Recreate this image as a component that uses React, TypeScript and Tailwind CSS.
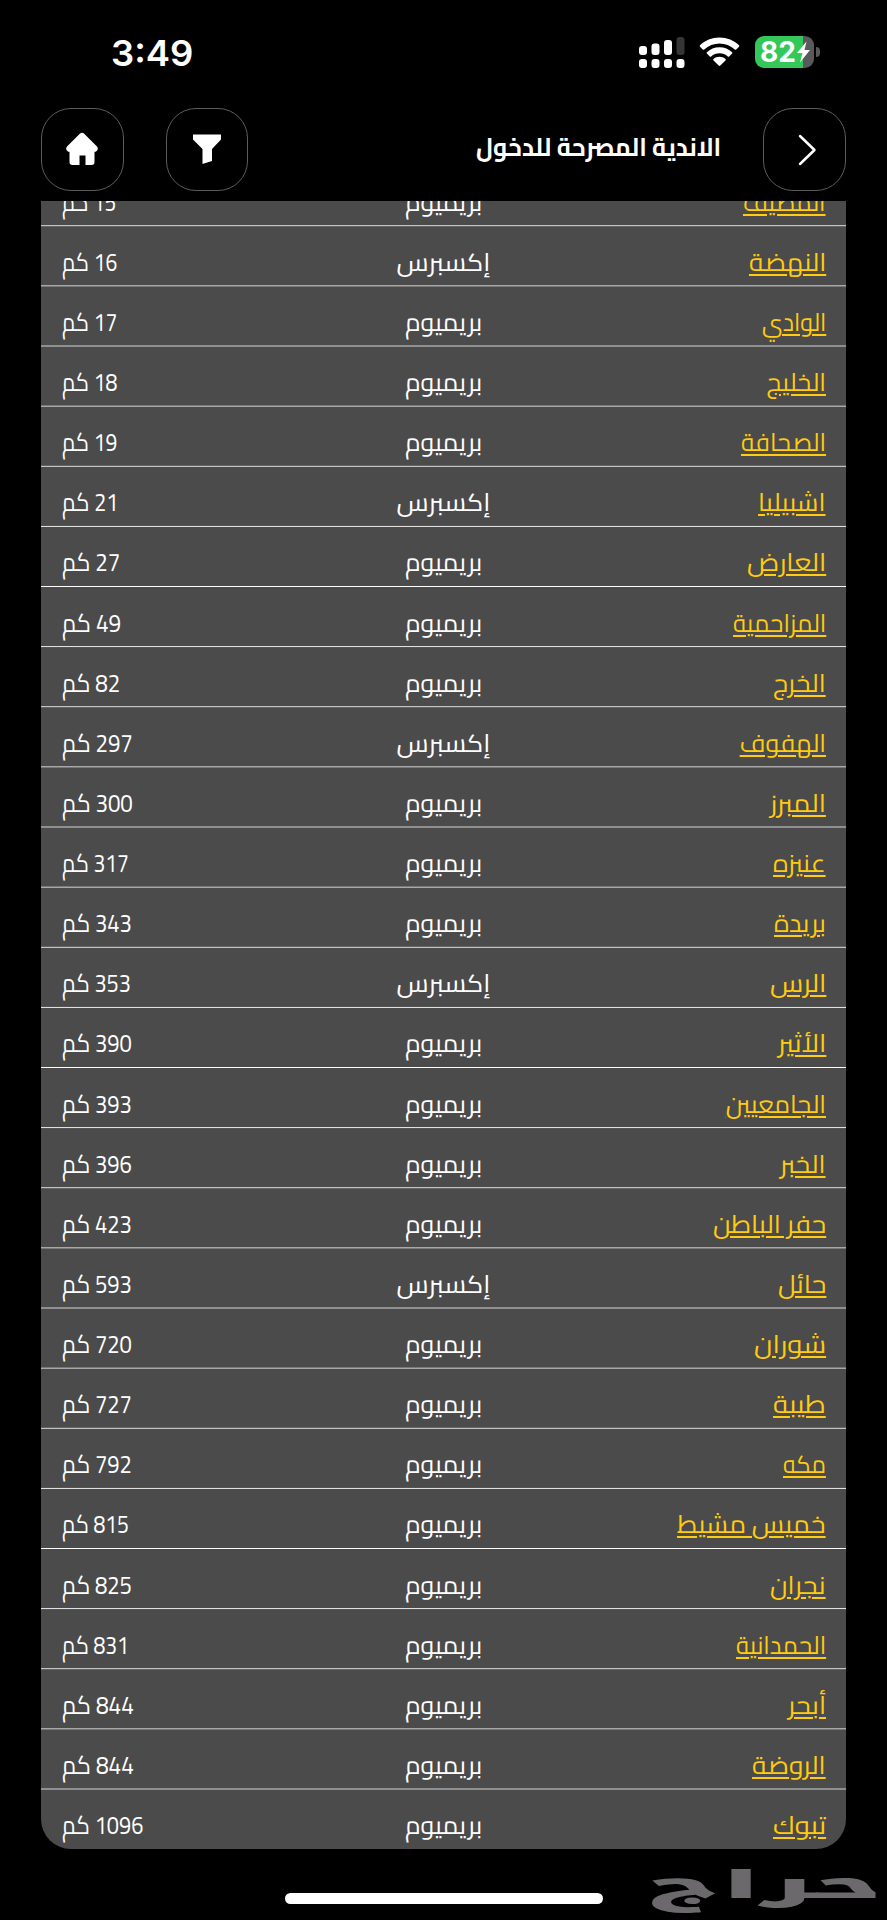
import { useLayoutEffect, useRef, useState } from "react";

type FitProps = { width: number; origin?: "left" | "right" | "center"; className?: string; children: string };

/* Scales a single line of text horizontally so it fills the given width. */
function FitText({ width, origin = "right", className = "", children }: FitProps) {
  const ref = useRef<HTMLSpanElement>(null);
  const [scale, setScale] = useState(1);
  useLayoutEffect(() => {
    if (ref.current) setScale(width / ref.current.offsetWidth);
  }, [width]);
  return (
    <span
      ref={ref}
      className={`inline-block whitespace-nowrap ${className}`}
      style={{ transform: `scaleX(${scale})`, transformOrigin: `${origin} center` }}
    >
      {children}
    </span>
  );
}

type Club = { name: string; nameWidth: number; express?: boolean; km: number; kmWidth: number };

const clubs: Club[] = [
  { name: "المصيف", nameWidth: 83, km: 15, kmWidth: 54 },
  { name: "النهضة", nameWidth: 77, express: true, km: 16, kmWidth: 55 },
  { name: "الوادي", nameWidth: 64, km: 17, kmWidth: 55 },
  { name: "الخليج", nameWidth: 59, km: 18, kmWidth: 55 },
  { name: "الصحافة", nameWidth: 85, km: 19, kmWidth: 55 },
  { name: "اشبيليا", nameWidth: 68, express: true, km: 21, kmWidth: 56 },
  { name: "العارض", nameWidth: 79, km: 27, kmWidth: 58 },
  { name: "المزاحمية", nameWidth: 93, km: 49, kmWidth: 59 },
  { name: "الخرج", nameWidth: 53, km: 82, kmWidth: 58 },
  { name: "الهفوف", nameWidth: 86, express: true, km: 297, kmWidth: 71 },
  { name: "المبرز", nameWidth: 56, km: 300, kmWidth: 71 },
  { name: "عنيزه", nameWidth: 53, km: 317, kmWidth: 67 },
  { name: "بريدة", nameWidth: 52, km: 343, kmWidth: 70 },
  { name: "الرس", nameWidth: 56, express: true, km: 353, kmWidth: 69 },
  { name: "الأثير", nameWidth: 48, km: 390, kmWidth: 70 },
  { name: "الجامعيين", nameWidth: 100, km: 393, kmWidth: 70 },
  { name: "الخبر", nameWidth: 46, km: 396, kmWidth: 70 },
  { name: "حفر الباطن", nameWidth: 113, km: 423, kmWidth: 70 },
  { name: "حائل", nameWidth: 48, express: true, km: 593, kmWidth: 70 },
  { name: "شوران", nameWidth: 72, km: 720, kmWidth: 70 },
  { name: "طيبة", nameWidth: 53, km: 727, kmWidth: 70 },
  { name: "مكه", nameWidth: 43, km: 792, kmWidth: 70 },
  { name: "خميس مشيط", nameWidth: 149, km: 815, kmWidth: 67 },
  { name: "نجران", nameWidth: 56, km: 825, kmWidth: 70 },
  { name: "الحمدانية", nameWidth: 90, km: 831, kmWidth: 67 },
  { name: "أبحر", nameWidth: 38, km: 844, kmWidth: 72 },
  { name: "الروضة", nameWidth: 74, km: 844, kmWidth: 72 },
  { name: "تبوك", nameWidth: 53, km: 1096, kmWidth: 81 },
];

const ROW_PITCH = 60.125;
const FIRST_LINE = 24.25;
/* Bottom edge of row i, measured from the top of the visible list. */
const edge = (i: number) => FIRST_LINE + ROW_PITCH * i;

function Row({ club, index }: { club: Club; index: number }) {
  const top = index === 0 ? -36 : Math.floor(edge(index - 1));
  const bottom = index === clubs.length - 1 ? 1648 : Math.floor(edge(index));
  const fraction = edge(index - 1) - Math.floor(edge(index - 1));
  return (
    <div style={{ height: bottom - top }}>
      <div className="h-px bg-white" style={{ opacity: Math.pow(1 - fraction, 1.4) }} />
      <div className="h-px bg-white" style={{ opacity: Math.pow(fraction, 1.4) }} />
      <div className="grid h-[58px] grid-cols-3 pt-[13px] pr-5 pl-[21px] text-[25px] leading-[44px] text-white">
        <div className="text-right text-[#ffcc10]">
          <FitText width={club.nameWidth} className="underline decoration-2 underline-offset-[3px]">{club.name}</FitText>
        </div>
        <div className="pr-px text-center">
          <FitText width={club.express ? 94 : 77} origin="center">{club.express ? "إكسبرس" : "بريميوم"}</FitText>
        </div>
        <div className="text-left text-[26px]">
          <FitText width={club.kmWidth} origin="left">{`${club.km} كم`}</FitText>
        </div>
      </div>
    </div>
  );
}

const button = "flex h-[83px] items-center justify-center rounded-[30px] border border-[#5c5c5c]";

function StatusBar() {
  return (
    <div dir="ltr" className="flex h-[108px] items-start justify-between pr-[67px] pl-[111px]">
      <div className="mt-[30px] flex h-[46px] items-center font-['Inter'] text-[36px] leading-[46px] font-semibold text-white">
        <FitText width={82} origin="left">3:49</FitText>
      </div>
      <div className="mt-[36px] flex h-8 items-start">
        <svg className="mr-[14px]" width="46" height="32" viewBox="0 0 46 32" fill="#fff">
          <rect x="0" y="10" width="8" height="9" rx="3" />
          <rect x="12.5" y="7.5" width="8" height="11.5" rx="3" />
          <rect x="25" y="4" width="8" height="15" rx="3" />
          <rect x="37.5" y="1" width="8" height="18" rx="3" fill="#353535" />
          <rect x="0" y="23" width="8" height="9" rx="3" />
          <rect x="12.5" y="23" width="8" height="9" rx="3" />
          <rect x="25" y="23" width="8" height="9" rx="3" />
          <rect x="37.5" y="23" width="8" height="9" rx="3" />
        </svg>
        <svg className="mr-[15px]" width="41" height="32" viewBox="0 0 41 32" fill="#fff">
          <path d="M20.500 1.500C28 1.500 35 4.500 40 9.300q.7.700 0 1.400l-2.800 2.800q-.7.600-1.400 0C31.500 9.600 26.200 7.400 20.500 7.400S9.500 9.600 5.200 13.500q-.7.600-1.400 0L1 10.700q-.7-.7 0-1.400C6 4.500 13 1.500 20.500 1.500z" />
          <path d="M20.500 11.200c5 0 9.300 1.900 12.600 5q.7.700 0 1.400l-2.900 2.800q-.7.600-1.400 0c-2.200-2-5.100-3.200-8.300-3.200s-6.100 1.200-8.300 3.200q-.7.600-1.400 0l-2.900-2.800q-.7-.7 0-1.400c3.300-3.100 7.600-5 12.600-5z" />
          <path d="M20.500 20.800c2.300 0 4.400.8 6 2.100q.8.700 0 1.500l-5.200 5.200q-.8.800-1.600 0l-5.200-5.200q-.8-.8 0-1.500c1.600-1.300 3.700-2.100 6-2.100z" />
        </svg>
        <div className="relative h-8 w-[59px] rounded-[9px] bg-[linear-gradient(to_right,#34c759_48.500px,#59595b_48.500px)]">
          <div className="flex h-8 items-center pl-[5px] font-['Inter'] text-[28px] leading-8 font-bold text-white">
            <FitText width={36} origin="left">82</FitText>
          </div>
          <svg className="absolute top-1 left-[41px]" width="15" height="24" viewBox="0 0 15 24" fill="#fff">
            <path d="M10.500 1.500 1 13h5.500L4 22.500 14 10H8.500z" />
          </svg>
        </div>
        <div className="mt-[11px] ml-[2px] h-[10px] w-1 rounded-r-[5px] bg-[#59595b]" />
      </div>
    </div>
  );
}

export default function App() {
  return (
    <div dir="rtl" className="relative flex h-[1920px] w-[887px] flex-col overflow-hidden bg-black font-['Cairo','Noto_Sans','DejaVu_Sans',sans-serif]">
      <StatusBar />
      <header className="flex h-[93px] shrink-0 items-start px-[41px]">
        <button className={`${button} w-[83px] pl-1`}>
          <svg width="20" height="32" viewBox="0 0 20 32" fill="none" stroke="#fff" strokeWidth="2.500" strokeLinecap="round" strokeLinejoin="round">
            <path d="M3 2 17.500 16 3 30" />
          </svg>
        </button>
        <h1 className="mr-[42px] grow pt-4 text-right text-[25px] leading-[46px] font-bold text-white">
          <FitText width={245}>الاندية المصرحة للدخول</FitText>
        </h1>
        <button className={`${button} w-[82px] pb-px`}>
          <svg width="30" height="32" viewBox="0 0 30 32" fill="#fff">
            <path d="M1 1.500h28v5L20 16v12L10.500 31V16L1 6.500z" />
          </svg>
        </button>
        <button className={`${button} mr-[42px] w-[83px] pr-0.5 pb-0.5`}>
          <svg width="34" height="34" viewBox="0 0 34 34" fill="#fff">
            <path d="M14.800 1.700q2.200-1.700 4.400 0L32 14.500q2.200 3-1.200 5.300H29.500V30q0 3-3 3H20.500V23.500h-6V33H7.500q-3 0-3-3V19.800H3.200Q-.2 17.500 2 14.500z" />
          </svg>
        </button>
      </header>
      <main className="mx-[41px] h-[1648px] shrink-0 overflow-hidden rounded-b-[30px] bg-[#4b4b4b]">
        <div className="-mt-9">
          {clubs.map((club, i) => (
            <Row key={club.name} club={club} index={i} />
          ))}
        </div>
      </main>
      <div className="mx-auto mt-11 h-[11px] w-[318px] shrink-0 rounded-full bg-white" />
      <div className="absolute right-[5px] bottom-0 h-[66px] w-[233px] font-['Noto_Kufi_Arabic','Cairo',sans-serif] text-[38px] leading-[62px] font-black text-[#6b696c]">
        <FitText width={233}>حراج</FitText>
      </div>
    </div>
  );
}
